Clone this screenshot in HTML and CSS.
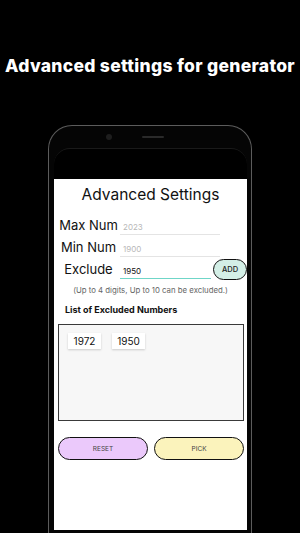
FILE: index.html
```html
<!DOCTYPE html>
<html lang="en">
<head>
  <meta charset="UTF-8" />
  <meta name="viewport" content="width=device-width, initial-scale=1.0" />
  <title>Advanced settings</title>
  <link rel="stylesheet" href="styles.css">
</head>
<body>
  <h1 class="headline">Advanced settings for generator</h1>

  <div class="phone">
    <div class="bezel">
      <span class="camera"></span>
      <span class="speaker"></span>
    </div>
    <div class="screen">
      <div class="status"></div>
      <div class="app">
        <h2 class="app-title">Advanced Settings</h2>

        <div class="field">
          <label class="field-label">Max Num</label>
          <div class="field-input placeholder">2023</div>
        </div>
        <div class="field">
          <label class="field-label">Min Num</label>
          <div class="field-input placeholder">1900</div>
        </div>
        <div class="field">
          <label class="field-label">Exclude</label>
          <div class="field-input active">1950</div>
          <button class="add-btn">ADD</button>
        </div>

        <p class="hint">(Up to 4 digits, Up to 10 can be excluded.)</p>

        <h3 class="list-title">List of Excluded Numbers</h3>
        <div class="excluded">
          <span class="chip">1972</span>
          <span class="chip">1950</span>
        </div>

        <div class="actions">
          <button class="pill reset">RESET</button>
          <button class="pill pick">PICK</button>
        </div>
      </div>
    </div>
  </div>
</body>
</html>
```

FILE: styles.css
```css
* {
  margin: 0;
  padding: 0;
  box-sizing: border-box;
}
body {
  background: #000;
  font-family: Inter, "Noto Sans", sans-serif;
  overflow: hidden;
  height: 533px;
}
.headline {
  color: #fff;
  font-size: 17.5px;
  font-weight: 800;
  text-align: center;
  line-height: 20px;
  padding-top: 56px;
  letter-spacing: 0.3px;
  white-space: nowrap;
}
.phone {
  width: 204px;
  margin: 49px auto 0;
  border: 1.5px solid #5c5c5c;
  border-bottom: none;
  border-radius: 24px 24px 0 0;
  background: #050505;
  padding: 0 4px 0 5px;
  height: 420px;
}
.bezel {
  height: 22px;
  display: flex;
  align-items: center;
  padding-left: 52px;
  gap: 30px;
}
.camera {
  width: 6px;
  height: 6px;
  border-radius: 50%;
  background: #1e1e1e;
}
.speaker {
  width: 22px;
  height: 2px;
  border-radius: 1px;
  background: #2a2a2a;
}
.screen {
  border-radius: 16px 16px 0 0;
  background: #000;
  border-top: 1px solid #1a1a1a;
}
.status {
  height: 30px;
}
.app {
  background: #fff;
  height: 351px;
  color: #111;
}
.app-title {
  font-size: 15.5px;
  font-weight: 400;
  text-align: center;
  line-height: 20px;
  padding-top: 6px;
  margin-bottom: 9px;
}
.field {
  display: flex;
  align-items: center;
  height: 22px;
}
.field-label {
  width: 66px;
  padding-left: 3px;
  text-align: center;
  font-size: 13px;
  white-space: nowrap;
}
.field-input {
  width: 100px;
  font-size: 8px;
  padding: 3px 0 2px 3px;
  border-bottom: 1px solid #e4e4e4;
  margin-top: 4px;
}
.placeholder {
  color: #b8b8b8;
}
.active {
  width: 91px;
  color: #111;
  border-bottom: 1px solid #6fd6c8;
}
.add-btn {
  margin-left: 2px;
  width: 34px;
  height: 21px;
  border: 1.5px solid #111;
  border-radius: 11px;
  background: #d3efe6;
  font-family: inherit;
  font-size: 7.5px;
  font-weight: 500;
  color: #222;
}
.hint {
  font-size: 7.8px;
  color: #666;
  text-align: center;
  margin-top: 5px;
  line-height: 10px;
}
.list-title {
  font-size: 9px;
  font-weight: 700;
  margin: 10px 0 0 11px;
  line-height: 10px;
}
.excluded {
  margin: 9px 3px 0 4px;
  height: 97px;
  background: #f7f7f7;
  border: 1.5px solid #3a3a3a;
  padding: 8px 9px;
  display: flex;
  align-items: flex-start;
  gap: 11px;
}
.chip {
  background: #fff;
  width: 33px;
  height: 16px;
  display: flex;
  justify-content: center;
  align-items: center;
  font-size: 10px;
  box-shadow: 0 1px 2px rgba(0, 0, 0, 0.18);
}
.actions {
  display: flex;
  gap: 6px;
  margin: 16px 3px 0 4px;
}
.pill {
  flex: 1;
  height: 23px;
  border: 1.5px solid #111;
  border-radius: 12px;
  font-family: inherit;
  font-size: 6.5px;
  color: #444;
}
.reset {
  background: #ebc9fb;
}
.pick {
  background: #fbf3bc;
}
```
